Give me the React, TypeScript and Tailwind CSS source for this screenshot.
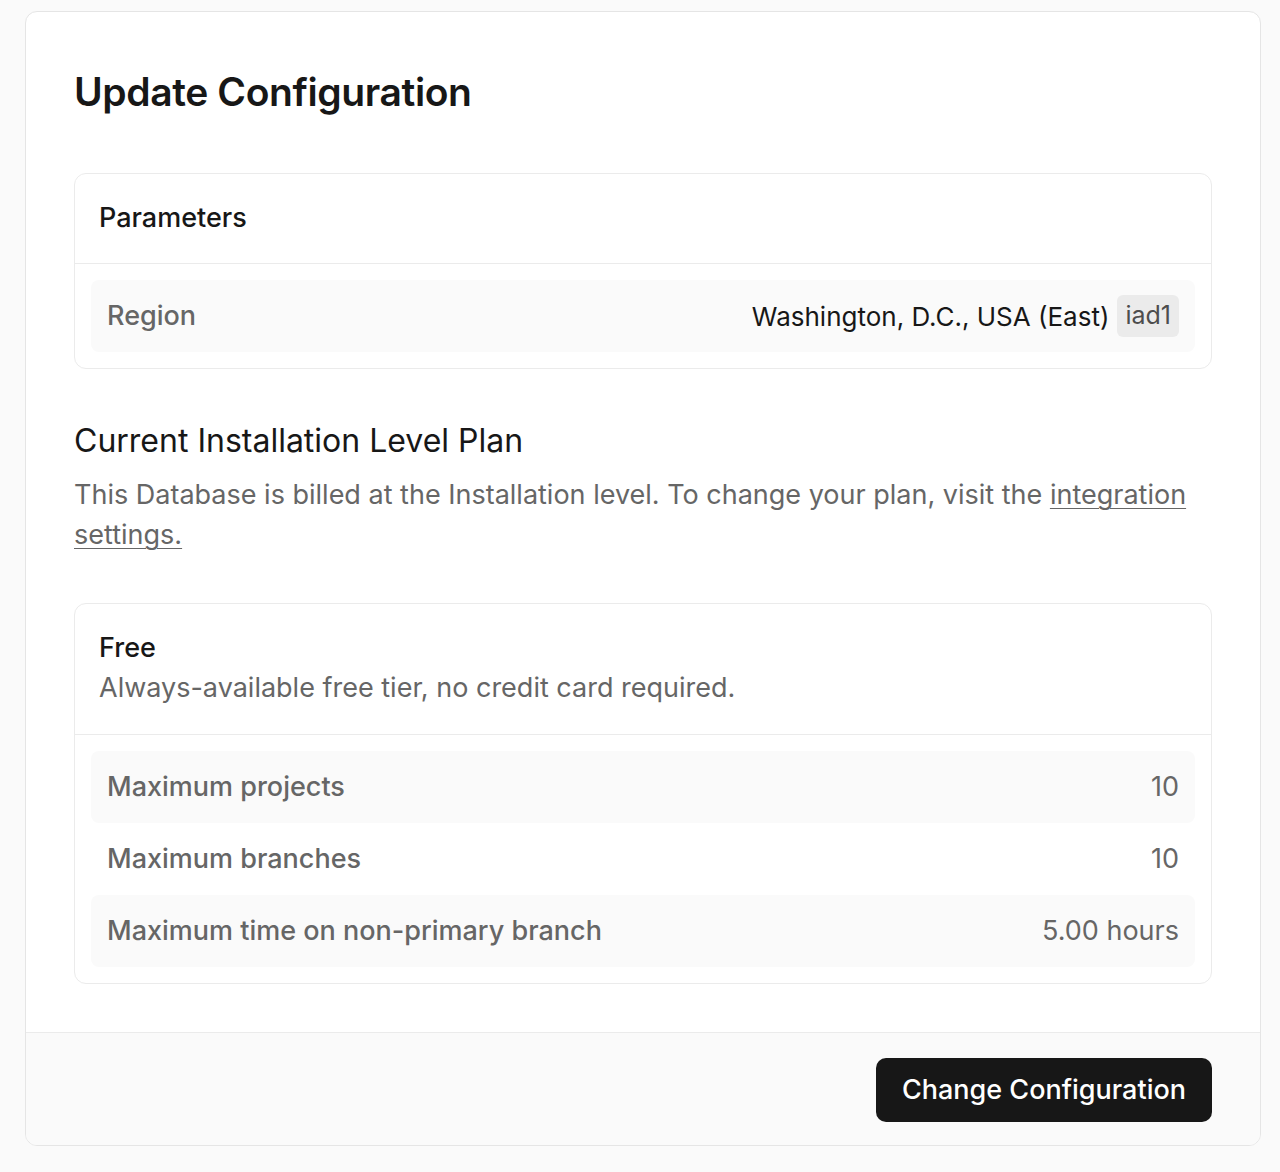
const regionRows = [{ label: "Region", value: "Washington, D.C., USA (East)", badge: "iad1" }];

const planRows = [
  { label: "Maximum projects", value: "10" },
  { label: "Maximum branches", value: "10" },
  { label: "Maximum time on non-primary branch", value: "5.00 hours" },
];

function Row({ label, value, badge, shaded }: { label: string; value: string; badge?: string; shaded: boolean }) {
  return (
    <div
      className={`flex h-[72px] items-center justify-between rounded-lg px-4 ${shaded ? "bg-[#fafafa]" : ""}`}
    >
      <span className="text-[27px] font-medium text-[#666666]">{label}</span>
      {badge ? (
        <div className="flex items-center gap-2">
          <span className="text-[26px] text-[#171717]">{value}</span>
          <span className="rounded-md bg-[#ebebeb] px-2 py-[2px] text-[25px] text-[#4d4d4d]">{badge}</span>
        </div>
      ) : (
        <span className="text-[27px] text-[#666666]">{value}</span>
      )}
    </div>
  );
}

export default function App() {
  return (
    <div className="min-h-screen bg-[#fafafa] px-[25px] pt-[11px] font-['Inter',sans-serif] antialiased">
      <div className="w-[1236px] overflow-hidden rounded-xl border border-[#e5e5e5] bg-white">
        <div className="px-12 pb-12 pt-[56px]">
          <h1 className="text-[39px] font-semibold leading-[48px] tracking-[-0.01em] text-[#171717]">
            Update Configuration
          </h1>

          <div className="mt-[57px] rounded-xl border border-[#ebebeb]">
            <div className="flex h-[90px] items-center border-b border-[#ebebeb] px-6">
              <span className="text-[27px] font-medium text-[#171717]">Parameters</span>
            </div>
            <div className="p-4">
              {regionRows.map((r) => (
                <Row key={r.label} {...r} shaded />
              ))}
            </div>
          </div>

          <h2 className="mt-[52px] text-[32px] leading-[40px] text-[#171717]">
            Current Installation Level Plan
          </h2>
          <p className="mt-[14px] text-[27px] leading-[40px] text-[#666666]">
            This Database is billed at the Installation level. To change your plan, visit the{" "}
            <a href="#" className="underline decoration-1 underline-offset-4">
              integration settings.
            </a>
          </p>

          <div className="mt-[48px] rounded-xl border border-[#ebebeb]">
            <div className="border-b border-[#ebebeb] px-6 pb-[28px] pt-[26px]">
              <div className="text-[27px] font-medium leading-[36px] text-[#171717]">Free</div>
              <div className="mt-[4px] text-[27px] leading-[36px] text-[#666666]">
                Always-available free tier, no credit card required.
              </div>
            </div>
            <div className="p-4">
              {planRows.map((r, i) => (
                <Row key={r.label} {...r} shaded={i % 2 === 0} />
              ))}
            </div>
          </div>
        </div>

        <div className="flex justify-end border-t border-[#ebebeb] bg-[#fafafa] px-12 pb-[23px] pt-[25px]">
          <button className="h-16 rounded-[10px] bg-[#171717] px-[26px] text-[27px] font-medium text-white">
            Change Configuration
          </button>
        </div>
      </div>
    </div>
  );
}
